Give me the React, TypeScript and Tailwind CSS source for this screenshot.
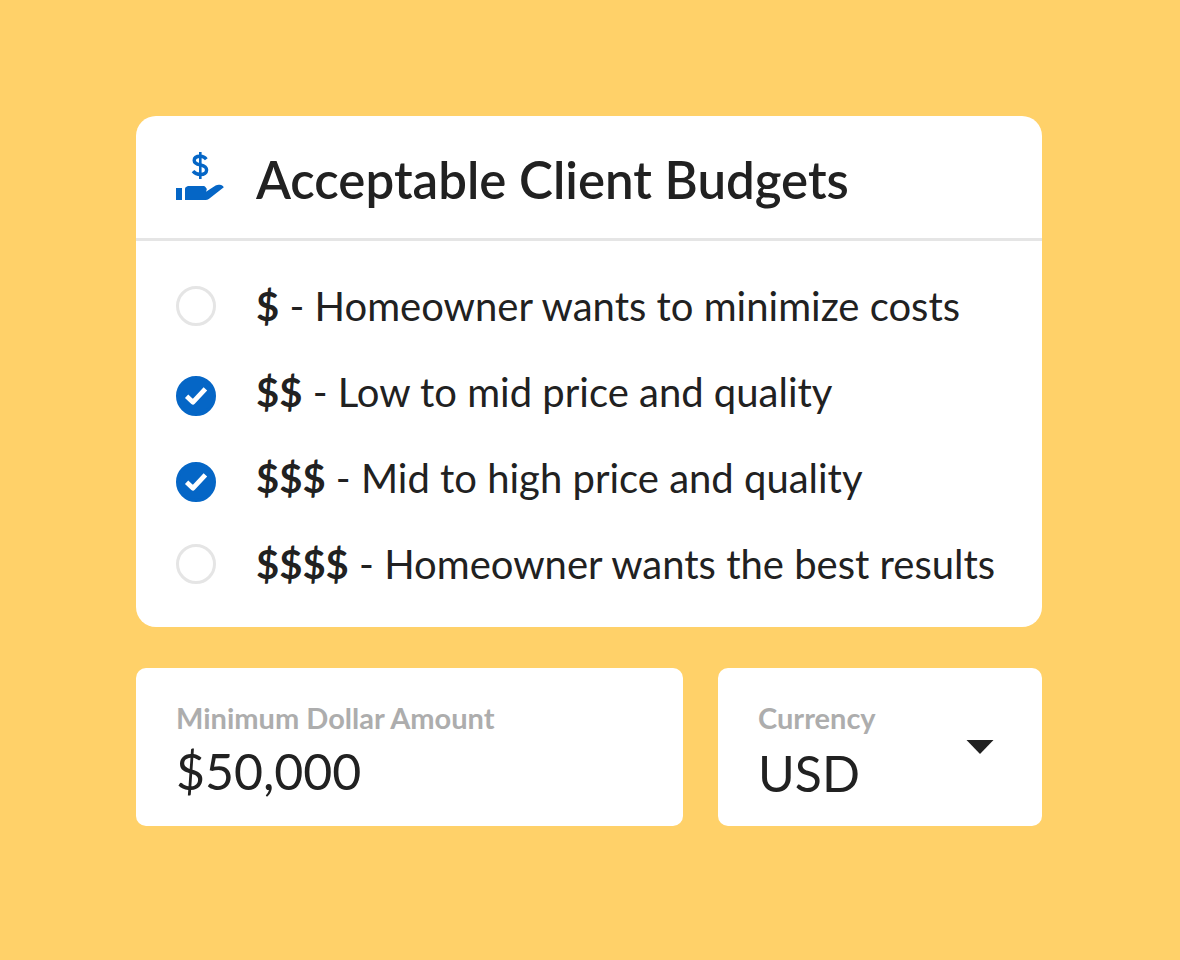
import { useState } from "react";

const budgets = [
  { symbol: "$", text: "Homeowner wants to minimize costs", checked: false },
  { symbol: "$$", text: "Low to mid price and quality", checked: true },
  { symbol: "$$$", text: "Mid to high price and quality", checked: true },
  { symbol: "$$$$", text: "Homeowner wants the best results", checked: false },
];

function HandDollarIcon() {
  return (
    <svg viewBox="0 0 48 48" className="size-12 shrink-0 text-[#0566c6]" aria-hidden="true">
      <path
        d="M30.3 7.2C28.8 5.2 26.8 4.2 24.2 4.2C20.6 4.2 18.2 5.8 18.2 8.4C18.2 11.2 20.8 12.1 24.4 12.9C28.4 13.8 30.6 15.2 30.6 18C30.6 20.8 28.2 22.5 24.6 22.5C21.4 22.5 18.8 21.4 17 19.2"
        fill="none"
        stroke="currentColor"
        strokeWidth="3.4"
      />
      <path d="M23 0h2.6v27H23z" fill="currentColor" />
      <path d="M0 36h6v12H0z" fill="currentColor" />
      <path
        d="M9 48V37C9 36.2 9.4 35.6 10 35.1L11.1 34.4C11.6 34.1 12 34 12.6 34H27.6C28.4 34 29 34.3 29.4 34.9L30.4 36.3C30.8 36.8 30.9 37.3 30.7 37.8L30 39.8L39.6 33.6C40.6 33 41.6 32.7 42.8 32.7H43.8C45.6 32.7 47 33.7 47.8 35.2L32.8 46.9C31.8 47.6 30.8 48 29.6 48Z"
        fill="currentColor"
      />
    </svg>
  );
}

function BudgetOption({ symbol, text, checked }: { symbol: string; text: string; checked: boolean }) {
  const [on, setOn] = useState(checked);
  return (
    <li>
      <label className="flex min-h-[86px] cursor-pointer items-center gap-10">
        <span className={on ? "grid shrink-0 pt-2" : "grid shrink-0"}>
          <input
            type="checkbox"
            checked={on}
            onChange={(e) => setOn(e.target.checked)}
            className="col-start-1 row-start-1 size-10 appearance-none rounded-full border-3 border-[#e5e5e5] bg-white checked:border-[#0566c6] checked:bg-[#0566c6]"
          />
          {on && (
            <svg viewBox="0 0 40 40" className="pointer-events-none col-start-1 row-start-1 size-10" aria-hidden="true">
              <path
                d="M10.6 20.2L17 26.2L29.4 12.8"
                fill="none"
                stroke="white"
                strokeWidth="4.8"
                strokeLinejoin="round"
              />
            </svg>
          )}
        </span>
        <span className="text-[40px] leading-12">
          <b className="font-bold">{symbol}</b> - {text}
        </span>
      </label>
    </li>
  );
}

export default function App() {
  return (
    <main className="min-h-screen bg-[#ffd169] py-29 pr-[138px] pl-[136px] font-['Lato','Open_Sans',sans-serif] text-[#212121]">
      <section className="rounded-[20px] bg-white pb-5">
        <header className="flex items-start gap-8 border-b-3 border-[#e5e5e5] px-10 pt-9 pb-[30px]">
          <HandDollarIcon />
          <h1 className="text-[51px] leading-14 font-semibold">Acceptable Client Budgets</h1>
        </header>
        <ul className="px-10 pt-[22px]">
          {budgets.map((b) => (
            <BudgetOption key={b.symbol} {...b} />
          ))}
        </ul>
      </section>

      <div className="mt-[41px] grid grid-cols-[547fr_324fr] gap-[35px]">
        <div className="min-w-0 rounded-[10px] bg-white px-10 pt-8 pb-6">
          <label htmlFor="amount" className="block text-[29px] leading-9 font-bold text-[#adadad]">
            Minimum Dollar Amount
          </label>
          <input
            id="amount"
            type="text"
            defaultValue="$50,000"
            className="block h-[66px] w-full bg-transparent pt-1 text-[50px] outline-none"
          />
        </div>
        <div className="grid min-w-0 items-center rounded-[10px] bg-white px-10">
          <div className="col-start-1 row-start-1 pt-8 pb-6">
            <label htmlFor="currency" className="block text-[29px] leading-9 font-bold text-[#adadad]">
              Currency
            </label>
            <select
              id="currency"
              defaultValue="USD"
              className="block h-[66px] w-full appearance-none bg-transparent pb-1 text-[50px] outline-none"
            >
              <option>USD</option>
              <option>EUR</option>
              <option>CAD</option>
            </select>
          </div>
          <svg
            viewBox="0 0 28 14"
            className="pointer-events-none col-start-1 row-start-1 mr-2 h-3.5 w-7 justify-self-end"
            aria-hidden="true"
          >
            <path d="M0.5 0H27.5L14 14Z" fill="#212121" />
          </svg>
        </div>
      </div>
    </main>
  );
}
